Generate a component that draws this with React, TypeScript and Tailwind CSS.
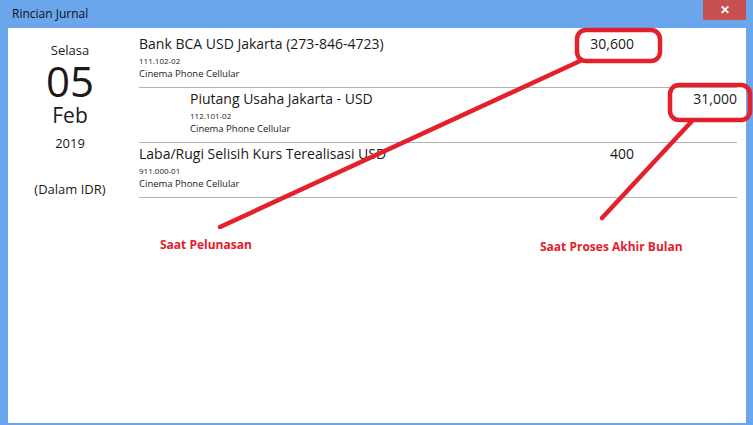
import React from "react";

interface JournalLine {
  account: string;
  code: string;
  company: string;
  debit?: string;
  credit?: string;
  indent?: boolean;
}

const lines: JournalLine[] = [
  {
    account: "Bank BCA USD Jakarta (273-846-4723)",
    code: "111.102-02",
    company: "Cinema Phone Cellular",
    debit: "30,600",
  },
  {
    account: "Piutang Usaha Jakarta - USD",
    code: "112.101-02",
    company: "Cinema Phone Cellular",
    credit: "31,000",
    indent: true,
  },
  {
    account: "Laba/Rugi Selisih Kurs Terealisasi USD",
    code: "911.000-01",
    company: "Cinema Phone Cellular",
    debit: "400",
  },
];

const font = { fontFamily: '"Open Sans", "Noto Sans", sans-serif' };

const JournalRow: React.FC<{ line: JournalLine }> = ({ line }) => (
  <div className="flex h-[55px] border-b border-[#b4b4b4] text-[#1a1a1a]">
    <div className={`flex-1 flex flex-col pt-[1px] ${line.indent ? "pl-[51px]" : ""}`}>
      <div className="text-[14px] leading-[20px] whitespace-nowrap">{line.account}</div>
      <div className="text-[8px] leading-[13px]">{line.code}</div>
      <div className="text-[9.5px] leading-[14px]">{line.company}</div>
    </div>
    <div className="w-[100px] text-right text-[14px] leading-[20px] pt-[1px]">{line.debit}</div>
    <div className="w-[103px] text-right text-[14px] leading-[20px] pt-[1px]">{line.credit}</div>
  </div>
);

export default function App() {
  return (
    <div className="relative w-[753px] h-[425px] bg-[#6ba6ec] flex flex-col overflow-hidden" style={font}>
      {/* Title bar */}
      <div className="h-[28px] flex items-start justify-between">
        <div className="pl-[12px] pt-[5px] text-[12px] text-[#111]">Rincian Jurnal</div>
        <div className="mr-[7px] w-[43px] h-[20px] bg-[#c75050] flex items-center justify-center text-white text-[12px] font-bold">
          ✕
        </div>
      </div>

      {/* Body */}
      <div className="flex-1 ml-[8px] mr-[7px] mb-[2px] bg-white flex">
        <div className="w-[124px] flex flex-col items-center text-[#1a1a1a]">
          <div className="mt-[14px] text-[13px] leading-[16px]">Selasa</div>
          <div className="text-[42px] leading-[42px] mt-[2px]">05</div>
          <div className="text-[21px] leading-[26px]">Feb</div>
          <div className="text-[13px] leading-[18px] mt-[6px]">2019</div>
          <div className="text-[13px] leading-[18px] mt-[28px]">(Dalam IDR)</div>
        </div>
        <div className="flex-1 pt-[5px] pl-[7px] pr-[9px]">
          {lines.map((l) => (
            <JournalRow key={l.code} line={l} />
          ))}
        </div>
      </div>

      {/* Annotations */}
      <svg className="absolute inset-0 pointer-events-none" width="753" height="425">
        <g stroke="#e3202b" strokeWidth="4.5" fill="none" strokeLinecap="round">
          <rect x="577" y="30" width="83" height="31" rx="9" />
          <rect x="670" y="85" width="80" height="35" rx="9" />
          <line x1="580" y1="61" x2="220" y2="227" />
          <line x1="692" y1="121" x2="602" y2="218" />
        </g>
      </svg>
      <div className="absolute left-[160px] top-[236px] text-[12px] font-bold text-[#e3202b]">
        Saat Pelunasan
      </div>
      <div className="absolute left-[540px] top-[238px] text-[12px] font-bold text-[#e3202b]">
        Saat Proses Akhir Bulan
      </div>
    </div>
  );
}
